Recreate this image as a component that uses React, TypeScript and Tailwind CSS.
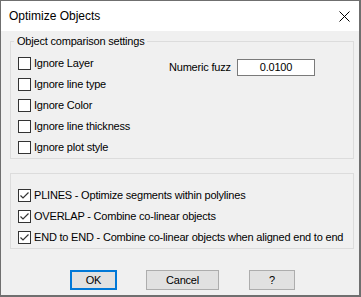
import React from "react";

function Box({ checked }: { checked?: boolean }) {
  return (
    <span className="w-[13px] h-[13px] border border-[#333333] bg-white flex items-center justify-center shrink-0">
      {checked && (
        <svg width="11" height="11" viewBox="0 0 11 11">
          <path d="M1.5 5.5 L4 8 L9.5 2.5" fill="none" stroke="#333333" strokeWidth="1.2" />
        </svg>
      )}
    </span>
  );
}

function Row({ label, checked }: { label: string; checked?: boolean }) {
  return (
    <div className="h-[21px] flex items-center gap-[3px]">
      <Box checked={checked} />
      <span className="whitespace-nowrap">{label}</span>
    </div>
  );
}

export default function App() {
  return (
    <div
      className="w-[361px] h-[297px] bg-[#f0f0f0] border-l border-t border-r-2 border-b-2 border-[#6f6f6f] flex flex-col text-[11px] leading-[13px] tracking-[-0.2px] text-black"
      style={{ fontFamily: '"Liberation Sans", Arial, sans-serif' }}
    >
      <div className="h-[30px] bg-white flex items-center justify-between pl-[8px] pr-[9px] shrink-0">
        <span className="text-[12px] tracking-normal">Optimize Objects</span>
        <svg width="11" height="11" viewBox="0 0 11 11">
          <path d="M0.5 0.5 L10.5 10.5 M10.5 0.5 L0.5 10.5" stroke="#000" strokeWidth="1" />
        </svg>
      </div>
      <div className="flex flex-col pl-[9px] pt-[4px]">
        <fieldset className="w-[344px] border border-[#dcdcdc] pl-[7px] pb-0">
          <legend className="-ml-[4px] px-[3px] leading-[13px]">Object comparison settings</legend>
          <div className="flex pt-[5px]">
            <div className="flex flex-col w-[151px]">
              <Row label="Ignore Layer" />
              <Row label="Ignore line type" />
              <Row label="Ignore Color" />
              <Row label="Ignore line thickness" />
              <Row label="Ignore plot style" />
            </div>
            <div className="flex items-center gap-[8px] h-[17px] mt-[6px]">
              <span className="whitespace-nowrap w-[60px]">Numeric fuzz</span>
              <div className="w-[78px] h-[17px] border border-[#7a7a7a] bg-white flex items-center justify-center">
                0.0100
              </div>
            </div>
          </div>
        </fieldset>
        <fieldset className="w-[344px] border border-[#dcdcdc] pl-[7px] pt-[11px] pb-0 mt-[14px]">
          <Row label="PLINES - Optimize segments within polylines" checked />
          <Row label="OVERLAP - Combine co-linear objects" checked />
          <Row label="END to END - Combine co-linear objects when aligned end to end" checked />
        </fieldset>
        <div className="flex mt-[21px]">
          <button className="ml-[60px] w-[47px] h-[20px] bg-[#e1e1e1] border-2 border-[#0078d7] flex items-center justify-center">
            OK
          </button>
          <button className="ml-[29px] w-[73px] h-[20px] bg-[#e1e1e1] border border-[#adadad] flex items-center justify-center">
            Cancel
          </button>
          <button className="ml-[30px] w-[46px] h-[20px] bg-[#e1e1e1] border border-[#adadad] flex items-center justify-center">
            ?
          </button>
        </div>
      </div>
    </div>
  );
}
